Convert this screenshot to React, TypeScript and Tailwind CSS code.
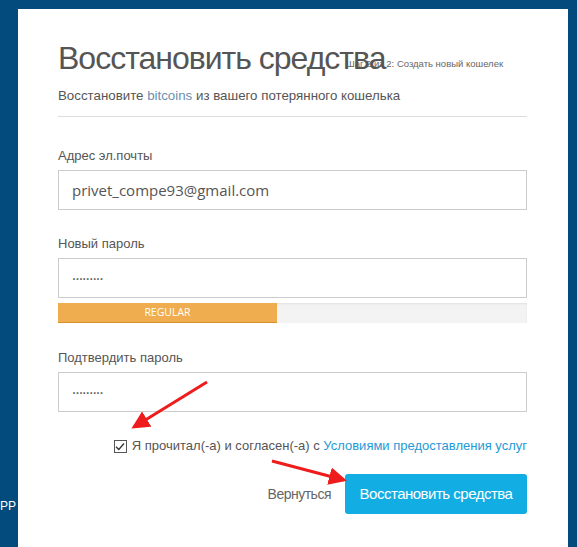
const sans = { fontFamily: '"Liberation Sans", Arial, sans-serif' };
const mont = { fontFamily: '"Open Sans", "Liberation Sans", sans-serif' };

function Field({ label, value, dots }: { label: string; value: string; dots?: boolean }) {
  return (
    <>
      <div className="text-[13px] leading-5 text-[#555]">{label}</div>
      <div
        className="mt-[4px] h-10 border border-[#ccc] flex items-center px-[13px] text-[15px] text-[#555]"
        style={mont}
      >
        {dots ? <span className="tracking-[-0.5px]">{value}</span> : value}
      </div>
    </>
  );
}

export default function App() {
  return (
    <div className="relative h-[547px] w-[577px] overflow-hidden bg-[#024b7c] pl-[18px] pt-[9px]" style={sans}>
      <div className="absolute left-0 top-[498px] text-[12px] leading-4 text-white">PP</div>

      <div className="h-[538px] w-[550px] bg-white pl-[40px] pr-[41px] pt-[29px]">
        <div className="relative">
          <div className="absolute left-[288px] top-[20px] text-[9.5px] leading-3 text-[#666]">
            Шаг 2 из 2: Создать новый кошелек
          </div>
          <h1 className="relative text-[32px] leading-10 tracking-[-1px] text-[#555]">
            Восстановить средства
          </h1>
        </div>
        <p className="mt-[8px] text-[13.3px] leading-5 text-[#555]">
          Восстановите <span className="text-[#6a8fb0]">bitcoins</span> из вашего потерянного кошелька
        </p>
        <div className="mt-[10px] h-px bg-[#ddd]" />

        <div className="mt-[29px]">
          <Field label="Адрес эл.почты" value="privet_compe93@gmail.com" />
        </div>

        <div className="mt-[24px]">
          <Field label="Новый пароль" value="·········" dots />
        </div>
        <div className="mt-[5px] flex h-5 bg-[#f3f3f3] shadow-[inset_0_1px_2px_rgba(0,0,0,0.08)]">
          <div
            className="flex w-[219px] items-center justify-center border-b border-[#d8912f] bg-[#efad4f] text-[10.5px] text-white"
            style={mont}
          >
            REGULAR
          </div>
        </div>

        <div className="mt-[25px]">
          <Field label="Подтвердить пароль" value="·········" dots />
        </div>

        <div className="mt-[24px] flex items-center justify-end text-[13px] leading-5 text-[#555]">
          <span className="mr-[5px] flex h-[13px] w-[13px] shrink-0 items-center justify-center border border-[#555] bg-white">
            <svg width="10" height="9" viewBox="0 0 10 9">
              <path d="M1 4.8 L3.8 7.5 L9 1.5" fill="none" stroke="#333" strokeWidth="1.3" />
            </svg>
          </span>
          <span className="whitespace-nowrap">
            Я прочитал(-а) и согласен(-а) с{' '}
            <span className="text-[#1e9ad6]">Условиями предоставления услуг</span>
          </span>
        </div>

        <div className="mt-[18px] flex items-center justify-end">
          <span className="mr-[14px] text-[14px] tracking-[-0.5px] text-[#666]">Вернуться</span>
          <button className="h-10 w-[182px] rounded-[3px] bg-[#12ade2] text-[15px] tracking-[-0.5px] text-white">
            Восстановить средства
          </button>
        </div>
      </div>

      <svg className="pointer-events-none absolute left-0 top-0" width="577" height="547">
        <defs>
          <marker id="ah" markerWidth="6" markerHeight="6" refX="5" refY="3" orient="auto" markerUnits="strokeWidth">
            <path d="M0 0 L6 3 L0 6 Z" fill="#ee1c1c" />
          </marker>
        </defs>
        <line x1="207" y1="382" x2="134" y2="427" stroke="#ee1c1c" strokeWidth="3" markerEnd="url(#ah)" />
        <line x1="272" y1="461" x2="344" y2="480" stroke="#ee1c1c" strokeWidth="3" markerEnd="url(#ah)" />
      </svg>
    </div>
  );
}
